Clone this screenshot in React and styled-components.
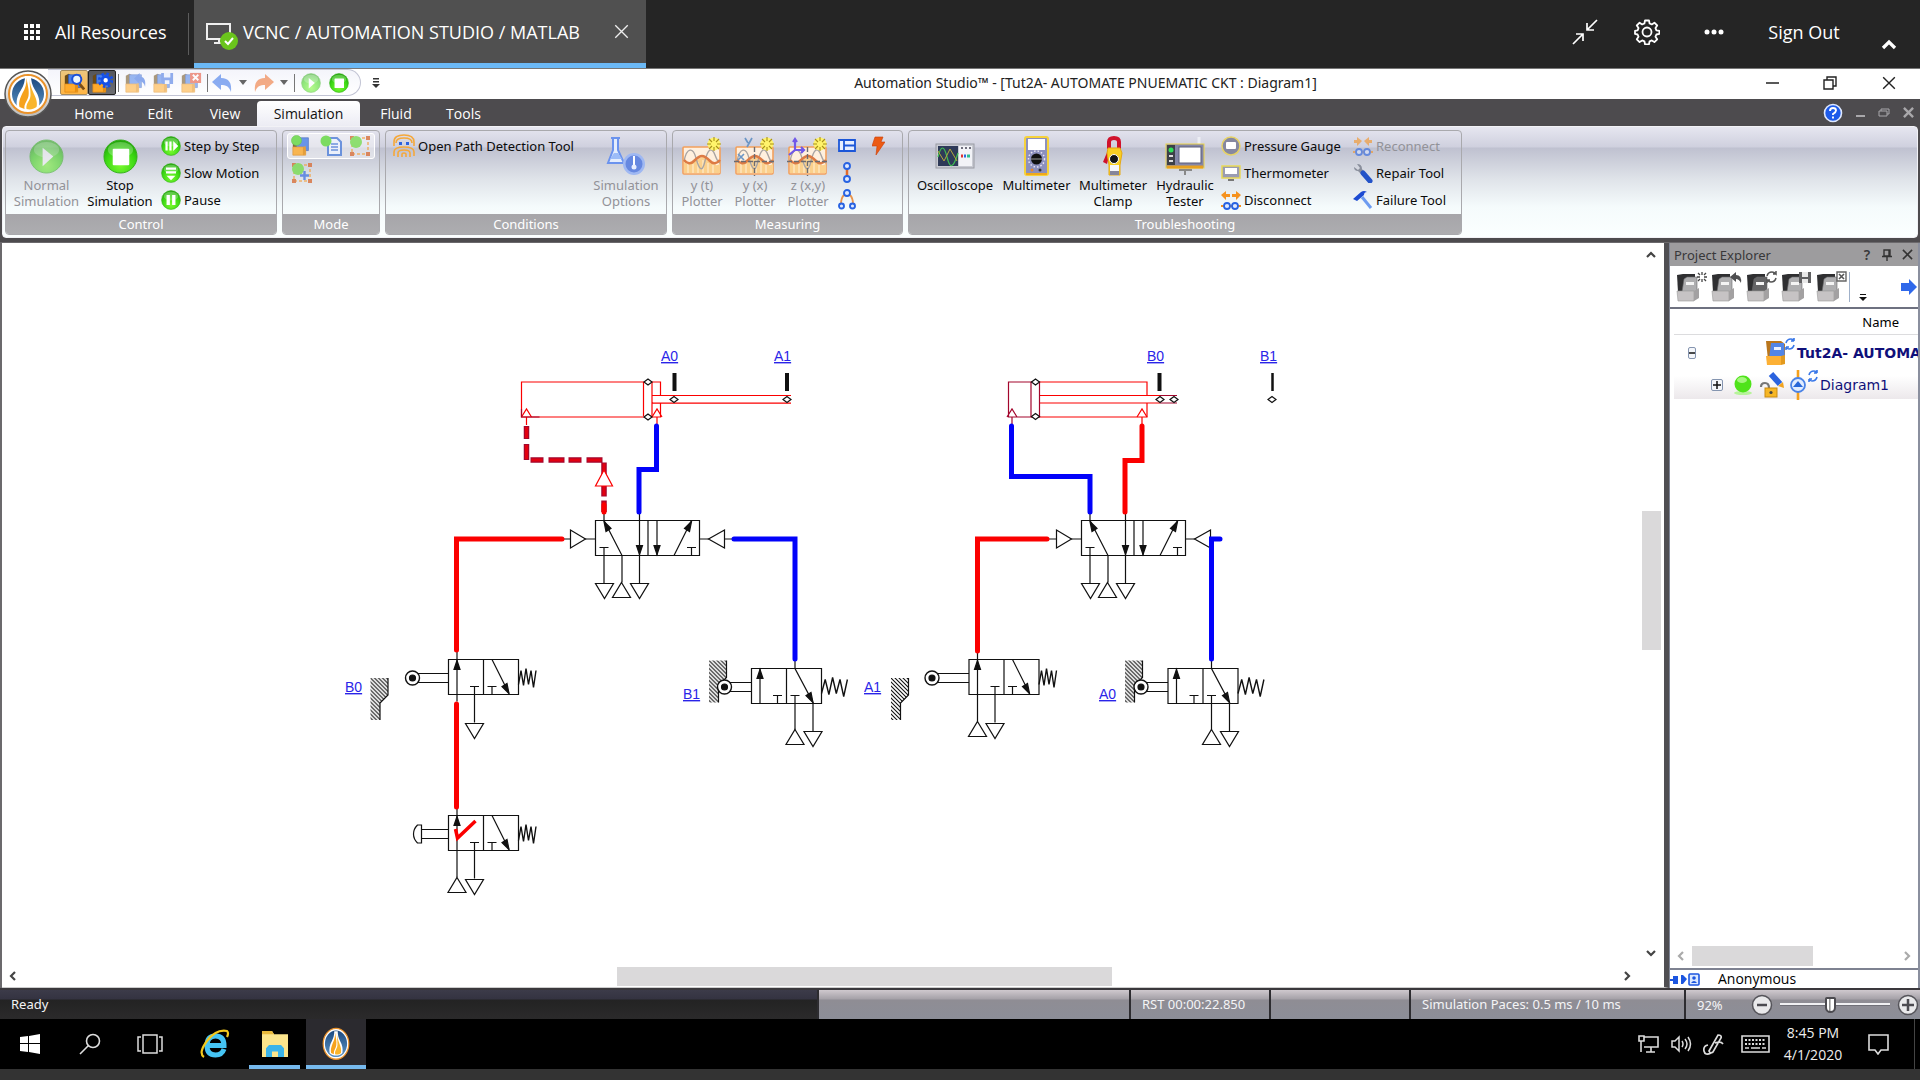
import React from 'react';
import styled, { createGlobalStyle } from 'styled-components';

const GlobalStyle = createGlobalStyle`
  * { box-sizing: border-box; }
  body { margin: 0; background: #333; font-family: 'Noto Sans', 'Open Sans', sans-serif; }
  button { font: inherit; color: inherit; background: none; border: 0; padding: 0; margin: 0; }
  ul { list-style: none; margin: 0; padding: 0; }
  svg { display: block; flex: none; }
`;

const Screen = styled.div`
  height: 100vh;
  display: flex;
  flex-direction: column;
  background: #333333;
  overflow: hidden;
`;

/* ---------- remote session bar ---------- */
const SessionBar = styled.header`
  display: flex;
  height: 69px;
  flex: none;
  background: #252525;
  border-bottom: 1px solid #777;
  color: #fff;
  font-family: 'Open Sans', 'Noto Sans', sans-serif;
  font-size: 18px;
`;
const ResourcesButton = styled.button`
  display: flex;
  align-items: center;
  gap: 14px;
  width: 188px;
  padding-left: 24px;
  padding-bottom: 4px;
  white-space: nowrap;
`;
const BarDivider = styled.div`
  width: 1px;
  height: 42px;
  margin: 13px 5px 0 0;
  background: #5c5c5c;
`;
const SessionTab = styled.div`
  display: flex;
  align-items: center;
  width: 452px;
  background: #505050;
  border-bottom: 5px solid #6bb9f6;
  padding: 0 17px 0 12px;
  white-space: nowrap;
`;
const TabName = styled.span`
  flex: 1;
  padding-left: 4px;
`;
const SessionActions = styled.div`
  display: flex;
  align-items: center;
  margin-left: auto;
  padding-bottom: 4px;
`;
const ActionButton = styled.button`
  display: flex;
  justify-content: center;
  align-items: center;
  width: ${(p) => p.$w || 62}px;
  height: 40px;
  padding-top: ${(p) => p.$drop || 0}px;
  white-space: nowrap;
`;

/* ---------- title bar ---------- */
const TitleBar = styled.div`
  display: flex;
  align-items: center;
  height: 30px;
  flex: none;
  position: relative;
  padding-bottom: 3px;
  background: #fff;
  color: #222;
  font-size: 14px;
`;
const AppButton = styled.button`
  position: absolute;
  left: 4px;
  top: 1px;
  z-index: 2;
`;
const QuickAccess = styled.div`
  display: flex;
  align-items: center;
  height: 27px;
  margin-left: 48px;
  padding-left: 12px;
  width: 313px;
  border: 1px solid #c2c4d4;
  border-left: 0;
  border-radius: 0 14px 14px 0;
  background: linear-gradient(#f4f5fb, #fff);
`;
const QuickButton = styled.button`
  display: flex;
  align-items: center;
  justify-content: center;
  width: ${(p) => p.$w || 28}px;
  height: 25px;
  opacity: ${(p) => (p.$dim ? 0.55 : 1)};
  ${(p) => p.$tone === 'gold' && 'background: linear-gradient(#ecc67e, #ffb545); border: 1px solid #a68c5e; border-radius: 2px;'}
  ${(p) => p.$tone === 'dark' && 'background: linear-gradient(#55565c, #6d6e72); border: 1px solid #222; border-radius: 2px;'}
`;
const QuickRule = styled.div`
  width: 1px;
  height: 18px;
  margin: 0 2px;
  background: #777;
`;
const WindowTitle = styled.h1`
  flex: 1;
  margin: 0;
  padding-left: 36px;
  text-align: center;
  font-size: 14px;
  font-weight: 400;
  white-space: nowrap;
`;
const WindowButton = styled.button`
  display: flex;
  justify-content: center;
  align-items: center;
  width: ${(p) => p.$w || 57}px;
  height: 26px;
`;

/* ---------- ribbon ---------- */
const TabStrip = styled.nav`
  display: flex;
  align-items: flex-end;
  height: 27px;
  flex: none;
  background: #4d4b4e;
  color: #fff;
  font-size: 14px;
  font-family: 'Open Sans', 'Noto Sans', sans-serif;
  padding-left: 61px;
`;
const RibbonTab = styled.button`
  height: 25px;
  width: ${(p) => p.$w}px;
  border-radius: 4px 4px 0 0;
  line-height: 20px;
  ${(p) => p.$active && 'background: linear-gradient(#fff, #ececf4); color: #111;'}
`;
const MdiControls = styled.div`
  display: flex;
  align-items: center;
  margin-left: auto;
  height: 27px;
`;
const Ribbon = styled.div`
  flex: none;
  padding: 0 2px 4px;
  background: #4d4b4e;
`;
const RibbonBody = styled.div`
  display: flex;
  gap: 5px;
  height: 112px;
  padding: 3px 2px 2px;
  border: 1px solid #f2f2f6;
  border-radius: 4px;
  background: linear-gradient(#e6e6f0 0, #cfd0de 20px, #bfc1d0 21px, #dfe3e9 52px, #f5fbfc 80px, #fbffff 100%);
`;
const Group = styled.section`
  display: flex;
  flex-direction: column;
  width: ${(p) => p.$w}px;
  border: 1px solid #a9a9ad;
  border-radius: 4px;
  overflow: hidden;
`;
const GroupBody = styled.div`
  display: flex;
  flex: 1;
  padding-top: 1px;
  padding-left: ${(p) => p.$left || 0}px;
`;
const GroupLabel = styled.h2`
  margin: 0;
  height: 20px;
  line-height: 20px;
  text-align: center;
  font-size: 13px;
  font-weight: 400;
  color: #fff;
  background: linear-gradient(#a6a5a9, #adadb0);
`;
const BigButton = styled.button`
  display: flex;
  flex-direction: column;
  align-items: center;
  width: ${(p) => p.$w}px;
  padding-top: 4px;
  font-size: 13px;
  line-height: 16px;
  color: ${(p) => (p.$off ? '#929298' : '#0b0b0b')};
`;
const BigIcon = styled.span`
  display: flex;
  align-items: center;
  justify-content: center;
  height: 40px;
  margin-bottom: 1px;
`;
const Stack = styled.div`
  display: flex;
  flex-direction: column;
  padding-left: ${(p) => p.$left || 0}px;
  width: ${(p) => p.$w || 'auto'};
`;
const SmallButton = styled.button`
  display: flex;
  align-items: center;
  gap: 3px;
  height: 27px;
  font-size: 13px;
  white-space: nowrap;
  color: ${(p) => (p.$off ? '#929298' : '#0b0b0b')};
`;
const ModeSet = styled.div`
  display: flex;
  width: 88px;
  height: 26px;
  margin: 1px 0 2px;
  border: 1px solid #fff;
  border-radius: 3px;
  background: rgba(255, 255, 255, 0.45);
`;
const ModeButton = styled.button`
  display: flex;
  align-items: center;
  justify-content: center;
  width: 29px;
  height: 24px;
  opacity: 0.8;
`;

/* ---------- workspace ---------- */
const Workspace = styled.main`
  display: grid;
  grid-template-columns: minmax(0, 1fr) 251px;
  flex: 1;
  min-height: 0;
  padding: 1px 0 0 2px;
  background: #6b696c;
`;
const CanvasPane = styled.section`
  display: grid;
  grid-template-columns: minmax(0, 1fr) 26px;
  grid-template-rows: minmax(0, 1fr) 22px;
  background: #fff;
  border-right: 5px solid #4f4e52;
  border-bottom: 1px solid #ccc;
`;
const Sheet = styled.div`
  overflow: hidden;
`;
const VScroll = styled.div`
  display: grid;
  grid-template-rows: 24px 244fr 138fr 291fr 24px;
  justify-items: center;
  align-items: center;
`;
const HScroll = styled.div`
  display: grid;
  grid-template-columns: 22px 593fr 495fr 504fr 22px;
  align-items: center;
  justify-items: center;
`;
const Thumb = styled.div`
  grid-area: ${(p) => p.$area};
  width: ${(p) => p.$w || '100%'};
  height: ${(p) => p.$h || '100%'};
  background: #dad9da;
`;
const ArrowButton = styled.button`
  grid-area: ${(p) => p.$area};
  display: flex;
  align-items: center;
  justify-content: center;
  width: 18px;
  height: 18px;
`;

/* ---------- project explorer ---------- */
const Explorer = styled.aside`
  display: flex;
  flex-direction: column;
  min-width: 0;
  background: #fff;
  border-left: 1px solid #7f8595;
  border-right: 2px solid #8a8f9e;
`;
const ExplorerHead = styled.div`
  display: flex;
  align-items: center;
  height: 23px;
  padding: 0 1px 0 4px;
  background: #9d9c9e;
  color: #38383a;
`;
const ExplorerTitle = styled.h2`
  flex: 1;
  margin: 0;
  font-size: 13px;
  font-weight: 400;
`;
const HeadButton = styled.button`
  display: flex;
  align-items: center;
  justify-content: center;
  width: 20px;
  height: 20px;
  font-size: 14px;
  font-weight: 600;
`;
const ExplorerTools = styled.div`
  display: flex;
  align-items: center;
  height: 43px;
  padding-left: 4px;
  border-bottom: 2px solid #6e7180;
`;
const ToolButton = styled.button`
  display: flex;
  align-items: center;
  justify-content: center;
  width: ${(p) => p.$w || 35}px;
  height: 36px;
`;
const ToolRule = styled.div`
  width: 1px;
  height: 30px;
  background: #9fb0c9;
`;
const TreeHeader = styled.div`
  height: 26px;
  margin-left: 4px;
  padding: 3px 19px 0 0;
  text-align: right;
  font-size: 13px;
  line-height: 20px;
  border-bottom: 1px solid #dcdcde;
`;
const Tree = styled.ul`
  flex: 1;
  overflow: hidden;
`;
const TreeRow = styled.li`
  display: flex;
  align-items: center;
  height: ${(p) => p.$h}px;
  margin-left: 4px;
  padding-left: ${(p) => p.$left}px;
  white-space: nowrap;
  color: #10107a;
  font: ${(p) => (p.$bold ? 'bold' : 'normal')} 14px 'DejaVu Sans', Verdana, sans-serif;
  background: ${(p) => (p.$hover ? 'linear-gradient(#fff 20%, #ece8eb)' : 'none')};
`;
const TreeLabel = styled.span`
  padding-left: 2px;
`;
const Toggle = styled.button`
  display: flex;
  width: 12px;
  height: 12px;
  margin-right: ${(p) => p.$gap}px;
  border: 1px solid #8595b0;
  border-radius: 2px;
  background: #f4f6fa;
  align-items: center;
  justify-content: center;
`;
const TreeScroll = styled.div`
  display: grid;
  grid-template-columns: 22px 120fr 82fr 22px;
  align-items: center;
  justify-items: center;
  height: 24px;
  padding-bottom: 2px;
  border-bottom: 2px solid #7e8291;
`;
const UserRow = styled.div`
  display: flex;
  align-items: center;
  gap: 18px;
  height: 18px;
  font-family: 'Open Sans', 'Noto Sans', sans-serif;
  font-size: 14px;
  line-height: 18px;
`;

/* ---------- status bar ---------- */
const StatusBar = styled.footer`
  display: flex;
  flex: none;
  height: 31px;
  border-top: 2px solid #3a383c;
  color: #f4f4f6;
  font-size: 13px;
  background: linear-gradient(#cfc9ce 0, #a5a1a8 9px, #8f8d94 10px, #8c8e98 100%);
`;
const StatusReady = styled.div`
  flex: 1;
  padding-left: 11px;
  line-height: 28px;
  background: linear-gradient(#3c3b49 0, #343341 9px, #232323 10px, #2b2a2b 100%);
`;
const StatusCell = styled.div`
  width: ${(p) => p.$w}px;
  padding-left: 11px;
  line-height: 28px;
  white-space: nowrap;
  border-left: 2px solid #2d2c30;
`;
const ZoomCell = styled.div`
  display: flex;
  align-items: center;
  width: 236px;
  padding: 0 1px 0 11px;
  border-left: 2px solid #2d2c30;
`;
const ZoomValue = styled.span`
  width: 54px;
`;
const ZoomSlider = styled.input`
  appearance: none;
  flex: 1;
  min-width: 0;
  height: 20px;
  margin: 0 7px;
  background: linear-gradient(transparent 8px, #f1f1f3 8px, #f1f1f3 10px, #707078 10px, #707078 11px, transparent 11px);
  &::-webkit-slider-thumb {
    appearance: none;
    width: 11px;
    height: 16px;
    background: linear-gradient(90deg, #fff 35%, #666 36%, #fff 60%);
    border: 2px solid #4c4b50;
    border-radius: 2px 2px 6px 6px;
  }
`;

/* ---------- task bar ---------- */
const TaskBar = styled.nav`
  display: flex;
  align-items: stretch;
  flex: none;
  height: 50px;
  margin-bottom: 11px;
  background: #000;
  color: #eee;
`;
const TaskButton = styled.button`
  display: flex;
  align-items: center;
  justify-content: center;
  width: ${(p) => p.$w || 60}px;
  margin-right: ${(p) => p.$after || 0}px;
  ${(p) => p.$open && 'border-bottom: 4px solid #76b9ed; padding-top: 4px;'}
  background: ${(p) => (p.$active ? '#2b2a2f' : 'none')};
`;
const Tray = styled.div`
  display: flex;
  align-items: center;
  margin-left: auto;
  padding-right: 5px;
`;
const TrayButton = styled.button`
  display: flex;
  justify-content: center;
  width: ${(p) => p.$w}px;
`;
const Clock = styled.button`
  width: 60px;
  text-align: center;
  white-space: nowrap;
  font-family: 'Open Sans', 'Noto Sans', sans-serif;
  font-size: 14px;
  line-height: 22px;
`;
const DesktopEdge = styled.div`
  width: 1px;
  align-self: stretch;
  background: #444;
`;

/* ---------- icon drawings ---------- */
function Logo({ size, rim }) {
  return (
    <svg width={size} height={size * (rim ? 1 : 1.2)} viewBox="0 0 48 48" preserveAspectRatio="none" aria-hidden="true">
      <defs>
        <linearGradient id="lg1" x1="0" y1="0" x2="0" y2="1">
          <stop offset="0" stopColor="#1c4a80" /><stop offset="1" stopColor="#5b93c4" />
        </linearGradient>
        <linearGradient id="lg2" x1="0" y1="0" x2="0" y2="1">
          <stop offset="0" stopColor="#fff" /><stop offset="1" stopColor="#bbb" />
        </linearGradient>
      </defs>
      {rim && <circle cx="24" cy="24" r="23" fill="url(#lg2)" stroke="#555" strokeWidth="1.5" />}
      <circle cx="24" cy="24" r={rim ? 19 : 22} fill="#fff" stroke="#e9922b" strokeWidth="2" />
      <circle cx="24" cy="24" r={rim ? 16 : 19} fill="url(#lg1)" />
      <path d="M21 6h6c0 5 1 9 4 14 4 6 5 11 4 17-6 5-16 5-22 0-1-6 0-11 4-17 3-5 4-9 4-14z" fill="#fff" />
      <path d="M22.500 8c0 6-1 10-4 15-3 6-4 10-3 14l5 2c-1-5 3-8 4-13 1-6-1-11-2-18z" fill="#f6a21c" />
      <path d="M25.500 8c0 6 2 10 4 15 3 6 4 10 3 14-3 2-6 3-10 2-1-6 4-8 4-14 0-5-1-10-1-17z" fill="#f9b52c" />
    </svg>
  );
}

function GreenOrb({ size, kind, dim }) {
  return (
    <svg width={size} height={size} viewBox="0 0 36 36" opacity={dim ? 0.55 : 1} aria-hidden="true">
      <defs>
        <radialGradient id="orb" cx="0.5" cy="0.75" r="0.75">
          <stop offset="0" stopColor="#7bfa30" /><stop offset="0.6" stopColor="#3bd813" /><stop offset="1" stopColor="#20a009" />
        </radialGradient>
      </defs>
      <circle cx="18" cy="18" r="17" fill="url(#orb)" stroke="#35b01c" />
      <ellipse cx="18" cy="11" rx="13" ry="8" fill="#fff" opacity="0.25" />
      {kind === 'play' && <path d="M14 9l11 9-11 10z" fill="#fff" />}
      {kind === 'stop' && <rect x="10" y="10" width="17" height="17" rx="1" fill="#fff" />}
      {kind === 'step' && <path d="M8 10h4v16H8zM15 10h4v16h-4zM22 9l9 9-9 9z" fill="#fff" />}
      {kind === 'slow' && <path d="M9 8h18v4H9zM9 15h18v4H9zM10 23h16l-8 8z" fill="#fff" />}
      {kind === 'pause' && <path d="M10 9h6v18h-6zM20 9h6v18h-6z" fill="#fff" />}
    </svg>
  );
}

function Binder({ size = 22, badge }) {
  return (
    <svg width={size} height={size} viewBox="0 0 24 24" aria-hidden="true">
      <path d="M2 4l4-2 4 2v9H2z" fill="#6a4a17" />
      <path d="M6 3h13v14H6z" fill="#4a80e8" stroke="#2b55b5" strokeWidth="0.7" />
      <path d="M2 13h11l3 2v7H2z" fill="#ffab2c" stroke="#d98413" strokeWidth="0.7" />
      <path d="M13 13l3-1v9l-3 1z" fill="#e58e12" />
      {badge === 'search' && <g><path d="M18 13l5 6" stroke="#7d4e12" strokeWidth="3" /><circle cx="15" cy="8" r="5" fill="#eaf5ff" stroke="#1c50d8" strokeWidth="2.2" /></g>}
      {badge === 'gear' && <g><circle cx="16" cy="9" r="7" fill="none" stroke="#1550e8" strokeWidth="3" strokeDasharray="2.7 2.8" /><circle cx="16" cy="9" r="4" fill="#fff" stroke="#1550e8" strokeWidth="3.2" /></g>}
      {badge === 'back' && <path d="M11 7l6-6v4c5 0 7 4 6 11-1-4-3-6-6-6v3z" fill="#3369e0" />}
      {badge === 'save' && <g><path d="M10 1h13v12H12l-2-2z" fill="#3c6fe0" /><path d="M13 1h7v5h-7zM14 9h5v4h-5z" fill="#e9f0ff" /></g>}
      {badge === 'close' && <g><rect x="11" y="1" width="12" height="11" fill="#e6482c" /><path d="M14 3l6 6M20 3l-6 6" stroke="#fff" strokeWidth="2" /></g>}
      {badge === 'ball' && <circle cx="6" cy="6" r="5.5" fill="#62d93e" stroke="#46b929" strokeWidth="0.6" />}
    </svg>
  );
}

function Arrow({ flip }) {
  return (
    <svg width="20" height="20" viewBox="0 0 20 20" aria-hidden="true">
      <path transform={flip ? 'translate(20 0) scale(-1 1)' : undefined} d="M0 9l9-8v4c8 0 11 5 10 14-2-6-5-7-10-7v5z" fill={flip ? '#ee6a24' : '#2f6ce8'} />
    </svg>
  );
}

const Caret = () => (
  <svg width="8" height="5" viewBox="0 0 8 5" aria-hidden="true"><path d="M0 0h8L4 5z" fill="#666" /></svg>
);
const Overflow = () => (
  <svg width="8" height="10" viewBox="0 0 8 10" aria-hidden="true"><path d="M1 0h6v1.500H1zM1 3h6v1.500H1zM0 6h8L4 10z" fill="#333" /></svg>
);

function Selection({ plus }) {
  return (
    <svg width="22" height="22" viewBox="0 0 22 22" aria-hidden="true">
      <path d="M3 3h16v16H3z" fill="none" stroke="#f2a548" strokeWidth="1.5" strokeDasharray="3 2" />
      {[[3, 3], [19, 3], [3, 19], [19, 19]].map(([x, y]) => <rect key={`${x}-${y}`} x={x - 2} y={y - 2} width="4" height="4" fill="#d8703c" />)}
      <circle cx="7" cy="7" r="6" fill="#79dc52" />
      {plus && <path d="M13.500 9v9M9 13.500h9" stroke="#4a78e0" strokeWidth="2.4" />}
    </svg>
  );
}
const PageMode = () => (
  <svg width="22" height="22" viewBox="0 0 22 22" aria-hidden="true">
    <path d="M8 3h9l4 4v13H8z" fill="#eef4ff" stroke="#4f7fd9" strokeWidth="2" />
    <path d="M11 9h7M11 12h7M11 15h7" stroke="#4f7fd9" strokeWidth="1.4" />
    <circle cx="6" cy="6" r="5.500" fill="#62d93e" />
  </svg>
);
const PathIcon = () => (
  <svg width="22" height="24" viewBox="0 0 22 24" fill="none" aria-hidden="true">
    <path d="M1 12V8q0-7 10-7t10 7v4M3 9q0-5 8-5t8 5" stroke="#f5a83a" strokeWidth="1.600" />
    <path d="M1 22v-4q0-5 10-5t10 5v4M5 23v-4q0-3 6-3t6 3v4M9 23v-3q0-1 2-1t2 1v3" stroke="#f5a83a" strokeWidth="1.600" />
    <path d="M6 8h3v3H6zM13 8h3v3h-3z" fill="#2b62e0" />
  </svg>
);
const FlaskIcon = () => (
  <svg width="42" height="40" viewBox="0 0 42 40" fill="none" aria-hidden="true">
    <path d="M6 2h9M8 3v11L3 27h16l-6-13V3" stroke="#6b93ee" strokeWidth="2" fill="#e4edfd" />
    <path d="M5 23l4-6h4l4 6z" fill="#9cbcf8" />
    <circle cx="29" cy="28" r="11" fill="#9fb8f2" />
    <circle cx="29" cy="28" r="8.500" fill="#6688e0" />
    <path d="M29 20v9" stroke="#fff" strokeWidth="2" /><circle cx="29" cy="31" r="2.500" fill="#e8eeff" />
  </svg>
);
const Spark = () => (
  <g><circle cx="33" cy="8" r="6.500" fill="#fff36b" />
    <path d="M33 1v4M33 11v4M26 8h4M36 8h4M28 3l3 3M38 3l-3 3M28 13l3-3M38 13l-3-3" stroke="#a8901a" strokeWidth="1.1" /></g>
);
function PlotterIcon({ kind }) {
  return (
    <svg width="42" height="40" viewBox="0 0 42 40" fill="none" aria-hidden="true">
      <rect x="2" y="11" width="37" height="27" rx="1" fill="#fff0de" stroke="#f3a05c" strokeWidth="1.6" />
      <path d="M3 26q5 4 10 0t8-5 9 5 9 1v10H3z" fill="#fbd08c" />
      <path d="M7 28v9M12 28v9M17 26v11M22 24v13M27 27v10M32 29v8" stroke="#fff0d6" />
      <path d="M3 25c3-14 9-14 12-3s6 16 9 3 7-14 10-6 3 6 5 8" stroke="#a9a4a2" strokeWidth="1.4" />
      <path d="M3 24q5 6 10 1t8-5 8 5 10-1" stroke="#dd7b45" strokeWidth="2.600" />
      {kind !== 't' && <path d="M20.500 11v29M0 25.500h42" stroke="#6c6b70" strokeWidth="1.400" strokeDasharray="5 2" />}
      {kind === 'x' && <g stroke="#6c96c6" strokeWidth="1.700"><path d="M11 2l3 5M18 2l-5 9M4 18l6 6M10 18l-6 6" /></g>}
      {kind === 'z' && <path d="M8 3v11h9M8 14l-6 5M6 6l2-3 2 3M14 11l3 3-3 3" stroke="#7058e8" strokeWidth="2.200" />}
      <Spark />
    </svg>
  );
}
const TableIcon = () => (
  <svg width="18" height="13" viewBox="0 0 18 13" fill="#e6eeff" stroke="#1b56d8" strokeWidth="1.800" aria-hidden="true"><path d="M1 1h16v11H1zM6 1v11M6 6.500h11" /></svg>
);
const LinkIcon = () => (
  <svg width="18" height="22" viewBox="0 0 18 22" fill="#dfe9ff" stroke="#2863e2" strokeWidth="1.900" aria-hidden="true"><path d="M9 7v8" stroke="#e2692a" strokeWidth="2.500" /><circle cx="9" cy="4" r="3" /><circle cx="9" cy="17" r="3" /></svg>
);
const BranchIcon = () => (
  <svg width="18" height="22" viewBox="0 0 18 22" fill="#dfe9ff" stroke="#2863e2" strokeWidth="1.900" aria-hidden="true"><path d="M6 6Q3 9 3 15M12 6q3 3 3 9" stroke="#e8934a" strokeWidth="1.800" fill="none" /><circle cx="9" cy="4" r="3" /><circle cx="3.500" cy="17" r="2.500" /><circle cx="14.500" cy="17" r="2.500" /></svg>
);
const BoltIcon = () => (
  <svg width="13" height="20" viewBox="0 0 13 20" aria-hidden="true"><path d="M3 1h8L9 6h4L4 19l1-9H0z" fill="#ec5a14" stroke="#c93d05" strokeWidth="0.600" /></svg>
);
const ScopeIcon = () => (
  <svg width="40" height="26" viewBox="0 0 40 26" fill="none" aria-hidden="true">
    <rect x="1" y="1" width="38" height="24" fill="#c9cbd3" stroke="#9a9ca4" />
    <rect x="3" y="3" width="20" height="20" fill="#2e3a58" />
    <path d="M3 14c3-12 6-12 9 0s6 12 11-4" stroke="#3fbf52" strokeWidth="1.200" /><path d="M3 8l6 10 6-12 7 12" stroke="#b4a73c" />
    <path d="M24 3h13v20H24z" fill="#f2f3f7" /><path d="M26 5h2M30 5h2M34 5h2" stroke="#445" strokeWidth="1.500" />
    <path d="M26 13h2" stroke="#d33" strokeWidth="3" /><path d="M29 13h2" stroke="#2a6be0" strokeWidth="3" /><path d="M32 13h3" stroke="#2abf90" strokeWidth="3" />
  </svg>
);
const MeterIcon = () => (
  <svg width="25" height="40" viewBox="0 0 25 40" aria-hidden="true">
    <rect x="1" y="1" width="23" height="38" rx="2" fill="#8d90bd" stroke="#f6d23c" strokeWidth="2" />
    <rect x="4" y="3" width="17" height="11" fill="#fff" />
    <circle cx="12.500" cy="23" r="8" fill="none" stroke="#e8e4f3" strokeWidth="1.500" strokeDasharray="1.500 2" />
    <circle cx="12.500" cy="23" r="5.500" fill="#111" /><path d="M7 23h11" stroke="#999" strokeWidth="1.200" />
    <circle cx="8" cy="34" r="1.500" fill="#e38830" /><circle cx="16" cy="34" r="1.500" fill="#333" /><path d="M2 38h21" stroke="#f0a91c" strokeWidth="2" />
  </svg>
);
const ClampIcon = () => (
  <svg width="20" height="40" viewBox="0 0 20 40" aria-hidden="true">
    <path d="M6 13V6q0-4 5-4t5 4v7" fill="none" stroke="#d0122c" strokeWidth="4" /><path d="M0 26l5-12 2 3-3 11z" fill="#d0122c" />
    <path d="M5 12h12l2 5-2 12v10H6V29L4 17z" fill="#f9cf22" stroke="#e5a812" />
    <circle cx="11" cy="23" r="4.500" fill="#151515" stroke="#fff" /><path d="M7 29h9v6H7z" fill="#f5f6fb" /><path d="M7 35h9v4H7z" fill="#85859a" />
  </svg>
);
const TesterIcon = () => (
  <svg width="40" height="40" viewBox="0 0 40 40" aria-hidden="true">
    <path d="M34 1v8" stroke="#eceef4" strokeWidth="3" /><rect x="1" y="8" width="38" height="24" fill="#8587a8" stroke="#ecd44a" />
    <rect x="2" y="9" width="8" height="20" fill="#3d4048" /><circle cx="6" cy="14" r="2.500" fill="#2ee05a" /><path d="M4 20h4M4 25h4" stroke="#ddd" strokeWidth="2" />
    <rect x="14" y="11" width="22" height="16" fill="#fff" stroke="#5c5f78" /><path d="M2 31h36" stroke="#e8a120" strokeWidth="3" />
    <path d="M14 34h13M20 33v6" stroke="#888" strokeWidth="2" />
  </svg>
);
const GaugeIcon = () => (
  <svg width="20" height="20" viewBox="0 0 20 20" aria-hidden="true"><circle cx="10" cy="10" r="9" fill="#8688a0" stroke="#e6d266" strokeWidth="1.500" /><rect x="5" y="6" width="10" height="7" rx="1" fill="#fff" /></svg>
);
const ThermoIcon = () => (
  <svg width="20" height="18" viewBox="0 0 20 18" aria-hidden="true"><rect x="1" y="2" width="18" height="12" fill="#9a9cb2" stroke="#e9d957" strokeWidth="1.500" /><path d="M4 4h12v6H4z" fill="#fff" /><path d="M7 15h6v2H7z" fill="#777" /></svg>
);
const ConnectIcon = ({ dim }) => (
  <svg width="20" height="20" viewBox="0 0 20 20" opacity={dim ? 0.6 : 1} aria-hidden="true">
    {dim
      ? <path d="M9 5L4 1v3H1v3h3v3zM11 5l5-4v3h3v3h-3v3z" transform="translate(20 0) scale(-1 1)" fill="#f59220" />
      : <path d="M0 5l5-4v3h4v3H5v3zM20 5l-5-4v3h-4v3h4v3z" fill="#f59220" />}
    <path d="M0 16h20" stroke="#f59220" strokeWidth="2" />
    <circle cx="6" cy="16" r="3" fill="#dfe9ff" stroke="#2863e2" strokeWidth="1.800" /><circle cx="14" cy="16" r="3" fill="#dfe9ff" stroke="#2863e2" strokeWidth="1.800" />
  </svg>
);
const WrenchIcon = () => (
  <svg width="20" height="20" viewBox="0 0 20 20" fill="none" aria-hidden="true"><path d="M1 4l4 3 2-2-3-4q5 0 5 5l3 4-3 2-4-4Q1 8 1 4z" fill="#8a8f9c" /><path d="M10 10l7 8" stroke="#2353c8" strokeWidth="5" strokeLinecap="round" /></svg>
);
const HammerIcon = () => (
  <svg width="20" height="20" viewBox="0 0 20 20" fill="none" aria-hidden="true"><path d="M0 9l8-7q3-2 6 0-3 0-3 3l-7 6z" fill="#1d4bd2" /><path d="M9 7l9 11" stroke="#6d9bf0" strokeWidth="3" /></svg>
);

function GreyBinder({ badge, dark }) {
  return (
    <svg width="31" height="32" viewBox="0 0 31 32" fill="none" aria-hidden="true">
      <path d="M1 4l6-1h12v18H2z" fill="#2f2f31" />
      <path d="M8 8l3-2h10v15H6z" fill={dark ? '#646466' : '#aeaeb0'} stroke="#6a6a6c" strokeWidth="0.600" />
      <path d="M10 11h8v3h-8z" fill="#f4f4f4" />
      <path d="M1 20h17v10H2z" fill="#c6c3c4" stroke="#999" strokeWidth="0.600" /><path d="M18 20l5-3v10l-5 3z" fill="#a3a1a2" />
      {badge === 'new' && <path d="M26 1v3M26 8v3M21 6h3M28 6h3M22 2l2 2M30 2l-2 2M22 10l2-2M30 10l-2-2" stroke="#444" strokeWidth="1.300" />}
      {badge === 'back' && <path d="M19 6l6-5v3q6 0 5 8-2-4-5-4v3z" fill="#4e4e50" />}
      {badge === 'sync' && <path d="M21 5q1-4 5-4 2 0 4 2V0M30 3h-3M30 7q-1 4-5 4-2 0-4-2v3M21 9h3" stroke="#555" strokeWidth="1.500" />}
      {badge === 'save' && <g><path d="M18 1h12v11H18z" fill="#606062" /><path d="M21 1h6v5h-6zM21 8h6v4h-6z" fill="#e8e8e8" /></g>}
      {badge === 'close' && <g><path d="M21 1h9v9h-9z" fill="#fff" stroke="#666" strokeWidth="1.400" /><path d="M23 3l5 5M28 3l-5 5" stroke="#555" strokeWidth="1.600" /></g>}
    </svg>
  );
}
const ProjectIcon = () => (
  <svg width="30" height="30" viewBox="0 0 30 30" fill="none" aria-hidden="true">
    <path d="M1 3h15l4 3v16H3z" fill="#b9761c" /><path d="M6 5h13l1 16H4z" fill="#5185e6" /><path d="M9 9h7v3H9z" fill="#e9f1ff" />
    <path d="M1 18h15v9H2z" fill="#fcb035" /><path d="M16 18l4-1v9l-4 1z" fill="#e39a1e" />
    <path d="M21 5q1-4 5-4 2 0 3 2V0M29 3h-3M29 7q-1 4-5 4-2 0-3-2v3M21 9h3" stroke="#3a78e8" strokeWidth="1.600" />
  </svg>
);
const OrbIcon = () => (
  <svg width="20" height="22" viewBox="0 0 20 22" aria-hidden="true"><ellipse cx="10" cy="19" rx="9" ry="2" fill="#b7f39a" /><circle cx="10" cy="10" r="8.500" fill="#4fe31a" /><ellipse cx="9" cy="6" rx="5" ry="3" fill="#a4f67e" /></svg>
);
const LockIcon = () => (
  <svg width="26" height="28" viewBox="0 0 26 28" fill="none" aria-hidden="true">
    <path d="M2 16q0-4 4-4t4 5" stroke="#777" strokeWidth="2.200" /><rect x="6" y="17" width="12" height="9" fill="#f6b625" stroke="#c98a10" /><circle cx="12" cy="21.500" r="1.600" fill="#444" />
    <path d="M12 3l9 10" stroke="#2b63de" strokeWidth="6" /><path d="M19 15l5-4 1 6z" fill="#f1a31f" />
  </svg>
);
const DiagramIcon = () => (
  <svg width="28" height="30" viewBox="0 0 28 30" fill="none" aria-hidden="true">
    <path d="M8 0v30" stroke="#f5a01c" strokeWidth="2.600" /><circle cx="8" cy="15" r="7" fill="#e2edff" stroke="#4b83e6" strokeWidth="1.800" /><path d="M3 17l5-6 5 6z" fill="#2867d8" />
    <path d="M19 5q1-4 5-4 2 0 3 2V0M27 3h-3M27 7q-1 4-5 4-2 0-3-2v3M19 9h3" stroke="#3a78e8" strokeWidth="1.600" />
  </svg>
);
const UserIcon = () => (
  <svg width="30" height="13" viewBox="0 0 30 13" aria-hidden="true"><path d="M0 6h3V3h5v8H3V8H0zM11 2h2l4 4-4 5h-2z" fill="#1c56e0" /><rect x="19" y="1" width="10" height="11" rx="1" fill="#dce8ff" stroke="#1c56e0" strokeWidth="1.600" /><circle cx="24" cy="5" r="1.800" fill="#1c56e0" /><path d="M21 10q3-4 6 0z" fill="#1c56e0" /></svg>
);

function Chevron({ dir, color = '#444', size = 12 }) {
  const turn = { up: 0, right: 90, down: 180, left: 270 }[dir];
  return (
    <svg width={size} height={size} viewBox="0 0 12 12" fill="none" aria-hidden="true">
      <path d="M2 8l4-4 4 4" transform={`rotate(${turn} 6 6)`} stroke={color} strokeWidth="2.200" />
    </svg>
  );
}
function Cross({ size = 13, color = '#222', weight = 1.2 }) {
  return (
    <svg width={size} height={size} viewBox="0 0 12 12" aria-hidden="true"><path d="M1 1l10 10M11 1L1 11" stroke={color} strokeWidth={weight} /></svg>
  );
}

/* ---------- pneumatic circuit ---------- */
const Drawing = styled.svg`
  font: 14px 'Liberation Sans', Arial, sans-serif;
  a { fill: #2a24e8; stroke: none; text-decoration: underline; }
`;
const RED = '#fb0000';
const BLUE = '#0202fa';
const WINE = '#a3062c';

const Tri = ({ x, y, up }) => <path d={up ? `M${x} ${y}l9 15h-18z` : `M${x - 9} ${y}h18l-9 15z`} fill="#fff" />;
const Pipe = ({ d, color }) => <path d={d} stroke={color} strokeWidth="5" strokeLinecap="round" />;
const Diamond = ({ x, y }) => <path d={`M${x - 4} ${y}l4-3 4 3-4 3z`} fill="#fff" />;

function FiveWay({ x }) {
  return (
    <g transform={`translate(${x} 520.500)`}>
      <path d="M0 0h104v35H0zM52.500 0v35M8.500-7v7M44-7v70M8.500 27v36M4 27h9M26.500 35v27M26.500 35L8.500 0M61.500 0v35M78.500 35L96 0M96 27v8M91.500 27h9M0 18.500h-33M104 18.500h34" fill="none" />
      <path d="M8.500 1l7 7-5 3zM96 1l-7 7 5 3zM44 34l-3-9h6zM61.500 34l-3-9h6z" fill="#111" />
      <Tri x={9} y={63} /><Tri x={26} y={62} up /><Tri x={44} y={63} />
      <path d="M-25 9.500v18l15-9zM129 9.500v18l-16-9z" fill="#fff" />
    </g>
  );
}
const Spring = ({ w }) => <path d={`M70 25l${w} -14 ${w} 15 ${w} -17 ${w} 16 ${w} -14 ${w} 17 ${w} -17`} fill="none" strokeWidth="1.400" />;

function ThreeWay({ x, y, pressed, supply = true, actuator = 'roller', gap = 32 }) {
  return (
    <g transform={`translate(${x} ${y})`}>
      <path d="M0 0h70v35H0zM35 0v35" fill="none" />
      <Spring w={pressed ? 2.5 : 3.7} />
      {pressed ? (
        <g>
          <path d={`M8.500-9v${supply ? 71 : 51}M26 27v36M21.500 27h9M43.500 27v8M39 27h9M43.500 0l17 34`} fill="none" />
          <path d="M8.500 1l3 9h-6zM60.500 34l-7-7 5-3z" fill="#111" />
          {supply && <Tri x={8.5} y={62} up />}
          <Tri x={26} y={64} />
        </g>
      ) : (
        <g>
          <path d="M8.500 0v35M26 27v8M21.500 27h9M43.500-8v8l18 34v29M43.500 27v35M39 27h9" fill="none" />
          <path d="M8.500 1l3 9h-6zM61.500 34l-7-7 5-3z" fill="#111" />
          <Tri x={43.5} y={61} up /><Tri x={61.5} y={63} />
        </g>
      )}
      <path d={`M0 14h${-gap}M0 23h${-gap}`} />
      {actuator === 'roller' ? (
        <g>
          <circle cx={-gap - 4} cy="18.500" r="7" fill="#fff" strokeWidth="1.400" />
          <circle cx={-gap - 4} cy="18.500" r="3" fill="#111" />
        </g>
      ) : (
        <path d="M-27 9.500v18h-4q-4-4-4-9t4-9z" fill="#fff" />
      )}
    </g>
  );
}
function Cam({ x, y }) {
  return (
    <g transform={`translate(${x} ${y})`}>
      <path d="M0 0h17.500v17l-8 8v17H0z" fill="url(#hatch)" stroke="none" />
      <path d="M17.500 0v17l-8 8v17" fill="none" />
    </g>
  );
}
const Tag = ({ x, y, children }) => <a href="#sensor"><text x={x} y={y}>{children}</text></a>;

function Circuit() {
  return (
    <Drawing width="1400" height="720" viewBox="2 243 1400 720" stroke="#111" strokeWidth="1.200" fill="none" role="img" aria-label="Pneumatic circuit">
      <defs>
        <pattern id="hatch" width="4" height="4" patternUnits="userSpaceOnUse">
          <path d="M-1-1l6 6M-1 3l2 2M3-1l2 2" stroke="#111" strokeWidth="1.100" />
        </pattern>
      </defs>

      <g stroke={RED}>
        <path d="M521.500 382h139v35h-139zM643.500 382v34M652 382v34" />
        <path d="M652 395.500h139M791 403h-139" /><path d="M653 396h138v7h-138z" fill="#fff" stroke="none" /><path d="M652 395.500h139M652 403h139" />
        <path d="M521.500 417l5-8 5 8M526.500 417v8M652 417l5-8 5 8M657 417v8" />
      </g>
      <path d="M521.500 409v8h18" stroke={WINE} />
      <Diamond x={648} y={382} /><Diamond x={648} y={417} /><Diamond x={674} y={399.5} /><Diamond x={787} y={399.5} />
      <path d="M674.500 373v18M787 373v18" strokeWidth="4" />

      <g stroke={RED}>
        <path d="M1031 382h116v35h-116" />
        <path d="M1040 396h119v7h-119z" fill="#fff" stroke="none" /><path d="M1039 395.500h121M1039 403h121" />
        <path d="M1137 417l5-8 5 8M1142 417v8" />
      </g>
      <path d="M1008.500 382h31v35h-31zM1031 382v35M1160 395.500h17M1160 403h17M1007 417l5-8 5 8M1012 417v8" stroke={WINE} />
      <Diamond x={1035.5} y={382} /><Diamond x={1035.5} y={416.5} /><Diamond x={1160} y={399.5} /><Diamond x={1174} y={399.5} /><Diamond x={1272} y={399.5} />
      <path d="M1159.500 373v18" strokeWidth="4" /><path d="M1272.500 373v18" strokeWidth="2.500" />

      <FiveWay x={595.5} /><FiveWay x={1081.5} />
      <ThreeWay x={448.5} y={659.5} pressed supply={false} />
      <ThreeWay x={448.5} y={815.5} pressed actuator="button" gap={27} />
      <Cam x={709} y={660.5} />
      <ThreeWay x={751.5} y={668.5} gap={23} />
      <ThreeWay x={969} y={659.5} pressed gap={33} />
      <Cam x={1125} y={660.5} />
      <ThreeWay x={1168} y={668.5} gap={23} />
      <Cam x={370.5} y={678} /><Cam x={891} y={678} />

      <path d="M526.500 426v34h77.500v52" stroke={WINE} strokeWidth="5.500" strokeDasharray="13 5 16 4" />
      <path d="M526.500 427v33h77.500v51" stroke="#e30010" strokeWidth="3" strokeDasharray="11 7 14 6" />
      <path d="M604 505v7" stroke={RED} strokeWidth="5" strokeLinecap="round" />
      <path d="M604 470l8.500 16h-17z" fill="#fff" stroke={RED} />
      <Pipe d="M656.500 426v43.500h-17.500V512" color={BLUE} />
      <Pipe d="M1011.500 426v50.500h78.500V512" color={BLUE} />
      <Pipe d="M1142 426v34.500h-17V512" color={RED} />
      <Pipe d="M562 539H456.500V650" color={RED} />
      <Pipe d="M456.500 704v103" color={RED} />
      <Pipe d="M734 539h61v120" color={BLUE} />
      <Pipe d="M1047 539h-69.500v112" color={RED} />
      <Pipe d="M1220 539h-8.500v120" color={BLUE} />
      <path d="M455.500 829l2 9 18-17" stroke={RED} strokeWidth="3.500" />

      <Tag x={661} y={361}>A0</Tag><Tag x={774} y={361}>A1</Tag>
      <Tag x={1147} y={361}>B0</Tag><Tag x={1260} y={361}>B1</Tag>
      <Tag x={345} y={692}>B0</Tag><Tag x={683} y={699}>B1</Tag>
      <Tag x={864} y={692}>A1</Tag><Tag x={1099} y={699}>A0</Tag>
    </Drawing>
  );
}

/* ---------- sections ---------- */
function TopBar() {
  return (
    <SessionBar>
      <ResourcesButton>
        <svg width="17" height="17" viewBox="0 0 17 17" fill="#fff" aria-hidden="true">
          {[0, 6, 12].map((x) => [0, 6, 12].map((y) => <rect key={`${x}${y}`} x={x} y={y} width="4" height="4" />))}
        </svg>
        All Resources
      </ResourcesButton>
      <BarDivider />
      <SessionTab>
        <svg width="33" height="38" viewBox="0 -8 33 38" fill="none" aria-hidden="true">
          <rect x="1" y="3" width="23" height="15" stroke="#eee" strokeWidth="2" /><path d="M13 18v4M8 22h9" stroke="#eee" strokeWidth="2" />
          <circle cx="23" cy="20" r="9" fill="#6ac41c" /><path d="M19 20l3 3 5-6" stroke="#fff" strokeWidth="2" />
        </svg>
        <TabName>VCNC / AUTOMATION STUDIO / MATLAB</TabName>
        <button aria-label="Close session"><Cross size={15} color="#eee" weight={1.1} /></button>
      </SessionTab>
      <SessionActions>
        <ActionButton aria-label="Exit full screen">
          <svg width="26" height="26" viewBox="0 0 26 26" fill="none" stroke="#fff" strokeWidth="1.700" aria-hidden="true"><path d="M25 1L15 11M15 4v7h7M1 25l10-10M4 15h7v7" /></svg>
        </ActionButton>
        <ActionButton aria-label="Settings">
          <svg width="26" height="26" viewBox="0 0 26 26" fill="none" stroke="#fff" strokeWidth="1.800" aria-hidden="true">
            <circle cx="13" cy="13" r="4.500" />
            <path strokeLinejoin="round" d="M11 1.500h4l.6 3 2.200.9 2.600-1.700 2.800 2.800-1.700 2.600.9 2.200 3 .6v3l-3 .6-.9 2.200 1.700 2.600-2.800 2.800-2.600-1.700-2.200.9-.6 3h-4l-.6-3-2.200-.9-2.600 1.700-2.800-2.800 1.700-2.600-.9-2.200-2.600-.6v-3l2.600-.6.9-2.200L2.800 6.500l2.800-2.800 2.600 1.700 2.200-.9z" />
          </svg>
        </ActionButton>
        <ActionButton $w={72} aria-label="More">
          <svg width="20" height="6" viewBox="0 0 20 6" fill="#fff" aria-hidden="true"><circle cx="3" cy="3" r="2.500" /><circle cx="10" cy="3" r="2.500" /><circle cx="17" cy="3" r="2.500" /></svg>
        </ActionButton>
        <ActionButton $w={108}>Sign Out</ActionButton>
        <ActionButton $w={62} $drop={26} aria-label="Collapse"><Chevron dir="up" color="#fff" size={18} /></ActionButton>
      </SessionActions>
    </SessionBar>
  );
}

function Title() {
  return (
    <TitleBar>
      <AppButton aria-label="Application menu"><Logo size={48} rim /></AppButton>
      <QuickAccess>
        <QuickButton $tone="gold" aria-label="Find"><Binder badge="search" /></QuickButton>
        <QuickButton $tone="dark" aria-label="Configure"><Binder badge="gear" /></QuickButton>
        <QuickRule />
        <QuickButton $dim aria-label="Reopen"><Binder badge="back" /></QuickButton>
        <QuickButton $dim aria-label="Save"><Binder badge="save" /></QuickButton>
        <QuickButton $dim aria-label="Close"><Binder badge="close" /></QuickButton>
        <QuickRule />
        <QuickButton $w={24} $dim aria-label="Undo"><Arrow /></QuickButton>
        <QuickButton $w={18} aria-label="Undo list"><Caret /></QuickButton>
        <QuickButton $w={24} $dim aria-label="Redo"><Arrow flip /></QuickButton>
        <QuickButton $w={16} aria-label="Redo list"><Caret /></QuickButton>
        <QuickRule />
        <QuickButton aria-label="Run"><GreenOrb size={20} kind="play" dim /></QuickButton>
        <QuickButton aria-label="Stop"><GreenOrb size={20} kind="stop" /></QuickButton>
      </QuickAccess>
      <QuickButton $w={30} aria-label="Customize"><Overflow /></QuickButton>
      <WindowTitle>Automation Studio™ - [Tut2A- AUTOMATE PNUEMATIC CKT : Diagram1]</WindowTitle>
      <WindowButton aria-label="Minimize"><svg width="13" height="2" aria-hidden="true"><path d="M0 1h13" stroke="#222" strokeWidth="1.500" /></svg></WindowButton>
      <WindowButton aria-label="Restore"><svg width="14" height="14" viewBox="0 0 14 14" fill="none" stroke="#222" strokeWidth="1.400" aria-hidden="true"><path d="M1 4h9v9H1zM4 4V1h9v9h-3" /></svg></WindowButton>
      <WindowButton $w={62} aria-label="Close window"><Cross size={14} /></WindowButton>
    </TitleBar>
  );
}

const TABS = [['Home', 66], ['Edit', 66], ['View', 64], ['Simulation', 103], ['Fluid', 72], ['Tools', 63]];

function Tabs() {
  return (
    <TabStrip>
      {TABS.map(([name, w]) => <RibbonTab key={name} $w={w} $active={name === 'Simulation'}>{name}</RibbonTab>)}
      <MdiControls>
        <WindowButton $w={30} aria-label="Help">
          <svg width="20" height="20" viewBox="0 0 20 20" aria-hidden="true"><circle cx="10" cy="10" r="8.500" fill="#1d5bea" stroke="#dfe9ff" strokeWidth="1.600" /><path d="M7 8q0-3 3-3t3 2.500q0 1.500-3 3.500v1M10 13.500v2" stroke="#fff" strokeWidth="1.900" fill="none" /></svg>
        </WindowButton>
        <WindowButton $w={24} aria-label="Minimize document"><svg width="9" height="9" aria-hidden="true"><path d="M0 8h9" stroke="#a9a8ab" strokeWidth="2" /></svg></WindowButton>
        <WindowButton $w={24} aria-label="Restore document"><svg width="12" height="9" viewBox="0 0 12 9" fill="none" stroke="#a9a8ab" aria-hidden="true"><path d="M1 3h8v5H1zM3 3V1h8v5H9" /></svg></WindowButton>
        <WindowButton $w={24} aria-label="Close document"><Cross size={11} color="#a9a8ab" weight={2.6} /></WindowButton>
      </MdiControls>
    </TabStrip>
  );
}

function Big({ w, off, icon, lines }) {
  return (
    <BigButton $w={w} $off={off}>
      <BigIcon>{icon}</BigIcon>
      {lines.map((line) => <span key={line}>{line}</span>)}
    </BigButton>
  );
}

function RibbonPanel() {
  return (
    <Ribbon>
      <RibbonBody>
        <Group $w={272}>
          <GroupBody $left={4}>
            <Big w={73} off icon={<GreenOrb size={35} kind="play" dim />} lines={['Normal', 'Simulation']} />
            <Big w={74} icon={<GreenOrb size={35} kind="stop" />} lines={['Stop', 'Simulation']} />
            <Stack $left={4}>
              <SmallButton><GreenOrb size={20} kind="step" />Step by Step</SmallButton>
              <SmallButton><GreenOrb size={20} kind="slow" />Slow Motion</SmallButton>
              <SmallButton><GreenOrb size={20} kind="pause" />Pause</SmallButton>
            </Stack>
          </GroupBody>
          <GroupLabel>Control</GroupLabel>
        </Group>
        <Group $w={98}>
          <GroupBody $left={4}>
            <Stack>
              <ModeSet>
                <ModeButton aria-label="Project mode"><Binder badge="ball" /></ModeButton>
                <ModeButton aria-label="Document mode"><PageMode /></ModeButton>
                <ModeButton aria-label="Selection mode"><Selection /></ModeButton>
              </ModeSet>
              <ModeButton aria-label="Add selection"><Selection plus /></ModeButton>
            </Stack>
          </GroupBody>
          <GroupLabel>Mode</GroupLabel>
        </Group>
        <Group $w={282}>
          <GroupBody $left={7}>
            <Stack $w="193px"><SmallButton><PathIcon />Open Path Detection Tool</SmallButton></Stack>
            <Big w={80} off icon={<FlaskIcon />} lines={['Simulation', 'Options']} />
          </GroupBody>
          <GroupLabel>Conditions</GroupLabel>
        </Group>
        <Group $w={231}>
          <GroupBody $left={2}>
            <Big w={54} off icon={<PlotterIcon kind="t" />} lines={['y (t)', 'Plotter']} />
            <Big w={52} off icon={<PlotterIcon kind="x" />} lines={['y (x)', 'Plotter']} />
            <Big w={54} off icon={<PlotterIcon kind="z" />} lines={['z (x,y)', 'Plotter']} />
            <Stack $w="37px" $left={3}>
              <SmallButton aria-label="Table"><TableIcon /></SmallButton>
              <SmallButton aria-label="Link"><LinkIcon /></SmallButton>
              <SmallButton aria-label="Branch"><BranchIcon /></SmallButton>
            </Stack>
            <Stack><SmallButton aria-label="Trigger"><BoltIcon /></SmallButton></Stack>
          </GroupBody>
          <GroupLabel>Measuring</GroupLabel>
        </Group>
        <Group $w={554}>
          <GroupBody $left={3}>
            <Big w={86} icon={<ScopeIcon />} lines={['Oscilloscope']} />
            <Big w={77} icon={<MeterIcon />} lines={['Multimeter']} />
            <Big w={76} icon={<ClampIcon />} lines={['Multimeter', 'Clamp']} />
            <Big w={68} icon={<TesterIcon />} lines={['Hydraulic', 'Tester']} />
            <Stack $w="134px" $left={2}>
              <SmallButton><GaugeIcon />Pressure Gauge</SmallButton>
              <SmallButton><ThermoIcon />Thermometer</SmallButton>
              <SmallButton><ConnectIcon />Disconnect</SmallButton>
            </Stack>
            <Stack>
              <SmallButton $off><ConnectIcon dim />Reconnect</SmallButton>
              <SmallButton><WrenchIcon />Repair Tool</SmallButton>
              <SmallButton><HammerIcon />Failure Tool</SmallButton>
            </Stack>
          </GroupBody>
          <GroupLabel>Troubleshooting</GroupLabel>
        </Group>
      </RibbonBody>
    </Ribbon>
  );
}

function ProjectExplorer() {
  return (
    <Explorer>
      <ExplorerHead>
        <ExplorerTitle>Project Explorer</ExplorerTitle>
        <HeadButton>?</HeadButton>
        <HeadButton aria-label="Pin"><svg width="10" height="12" viewBox="0 0 10 12" fill="none" stroke="#333" strokeWidth="1.400" aria-hidden="true"><path d="M2 1h6v6H2zM0 7.500h10M5 8v4M7 1v6" /></svg></HeadButton>
        <HeadButton aria-label="Close panel"><Cross size={11} color="#333" weight={1.7} /></HeadButton>
      </ExplorerHead>
      <ExplorerTools>
        <ToolButton aria-label="New project"><GreyBinder badge="new" /></ToolButton>
        <ToolButton aria-label="Open project"><GreyBinder badge="back" /></ToolButton>
        <ToolButton aria-label="Refresh project"><GreyBinder badge="sync" dark /></ToolButton>
        <ToolButton aria-label="Save project"><GreyBinder badge="save" /></ToolButton>
        <ToolButton aria-label="Close project"><GreyBinder badge="close" /></ToolButton>
        <ToolRule />
        <ToolButton $w={26} aria-label="More tools"><svg width="8" height="30" viewBox="0 0 8 30" aria-hidden="true"><path d="M1 22h6v1H1zM0 25h8l-4 4z" fill="#111" /></svg></ToolButton>
        <ToolButton $w={42} aria-label="Next">
          <svg width="40" height="16" viewBox="0 0 40 16" aria-hidden="true"><path d="M24 4h8V0l8 8-8 8v-4h-8z" fill="#2f68ea" /></svg>
        </ToolButton>
      </ExplorerTools>
      <TreeHeader>Name</TreeHeader>
      <Tree>
        <TreeRow $h={35} $left={14} $bold>
          <Toggle $gap={69} aria-label="Collapse project"><svg width="6" height="6" aria-hidden="true"><path d="M0 3h6" stroke="#111" strokeWidth="1.500" /></svg></Toggle>
          <ProjectIcon />
          <TreeLabel>Tut2A- AUTOMA</TreeLabel>
        </TreeRow>
        <TreeRow $h={29} $left={37} $hover>
          <Toggle $gap={10} aria-label="Expand diagram"><svg width="8" height="8" aria-hidden="true"><path d="M0 4h8M4 0v8" stroke="#111" strokeWidth="1.500" /></svg></Toggle>
          <OrbIcon />
          <ToolButton $w={37} aria-label="Locked"><LockIcon /></ToolButton>
          <DiagramIcon />
          <TreeLabel>Diagram1</TreeLabel>
        </TreeRow>
      </Tree>
      <TreeScroll>
        <ArrowButton $area="1 / 1" aria-label="Scroll left"><Chevron dir="left" color="#aaa" /></ArrowButton>
        <Thumb $area="1 / 2" />
        <ArrowButton $area="1 / 4" aria-label="Scroll right"><Chevron dir="right" color="#aaa" /></ArrowButton>
      </TreeScroll>
      <UserRow><UserIcon />Anonymous</UserRow>
    </Explorer>
  );
}

const RoundButton = ({ plus, label }) => (
  <button aria-label={label}>
    <svg width="22" height="22" viewBox="0 0 22 22" aria-hidden="true">
      <circle cx="11" cy="11" r="9.500" fill="#e9e9eb" stroke="#55545a" strokeWidth="1.500" />
      <path d={plus ? 'M5 11h12M11 5v12' : 'M6 11h10'} stroke="#4b4a50" strokeWidth="2.500" />
    </svg>
  </button>
);

function Status() {
  return (
    <StatusBar>
      <StatusReady>Ready</StatusReady>
      <StatusCell $w={312} />
      <StatusCell $w={140}>RST 00:00:22.850</StatusCell>
      <StatusCell $w={140} />
      <StatusCell $w={275}>Simulation Paces: 0.5 ms / 10 ms</StatusCell>
      <ZoomCell>
        <ZoomValue>92%</ZoomValue>
        <RoundButton label="Zoom out" />
        <ZoomSlider type="range" aria-label="Zoom" min="0" max="100" defaultValue="45" />
        <RoundButton plus label="Zoom in" />
      </ZoomCell>
    </StatusBar>
  );
}

function Tasks() {
  return (
    <TaskBar>
      <TaskButton aria-label="Start"><svg width="20" height="20" viewBox="0 0 20 20" fill="#fff" aria-hidden="true"><path d="M0 3l8-1v7H0zM9 2l11-2v9H9zM0 10h8v8l-8-1zM9 10h11v10L9 18z" /></svg></TaskButton>
      <TaskButton aria-label="Search"><svg width="22" height="22" viewBox="0 0 22 22" fill="none" stroke="#ddd" strokeWidth="1.600" aria-hidden="true"><circle cx="14" cy="8" r="6.500" /><path d="M9.500 12.500L1 21" /></svg></TaskButton>
      <TaskButton aria-label="Task view"><svg width="26" height="20" viewBox="0 0 26 20" fill="none" stroke="#ddd" strokeWidth="1.500" aria-hidden="true"><path d="M6 1h14v18H6zM4 3H1v14h3M22 3h3v14h-3" /></svg></TaskButton>
      <TaskButton $w={69} aria-label="Internet Explorer">
        <svg width="30" height="30" viewBox="0 0 30 30" fill="none" aria-hidden="true">
          <path d="M24 20q-2 6-8.500 6Q7 26 7 16.500T15.500 7 24 16.500H9" stroke="#45c4f4" strokeWidth="5" /><path d="M4 28Q-2 24 7 12T27 2q2 2 0 6" stroke="#f4c91c" strokeWidth="2.200" />
        </svg>
      </TaskButton>
      <TaskButton $w={51} $after={6} $open aria-label="File Explorer">
        <svg width="28" height="28" viewBox="0 0 28 26" preserveAspectRatio="none" aria-hidden="true"><path d="M1 1h10l2 3h14v21H1z" fill="#fce58c" /><path d="M1 1h10l2 3H1z" fill="#e8b93c" /><path d="M5 25v-8l3-3h12l3 3v8h-6v-5h-6v5z" fill="#3cb4ea" /></svg>
      </TaskButton>
      <TaskButton $open $active aria-label="Automation Studio"><Logo size={28} /></TaskButton>
      <Tray>
        <TrayButton $w={30} aria-label="Network"><svg width="21" height="20" viewBox="0 0 21 20" fill="none" stroke="#ddd" strokeWidth="1.600" aria-hidden="true"><path d="M6 3h14v10H6M13 13v5M8 18h9M1 2h5v5H1zM3 7v11" /></svg></TrayButton>
        <TrayButton $w={36} aria-label="Volume"><svg width="21" height="18" viewBox="0 0 21 18" fill="none" stroke="#ddd" strokeWidth="1.500" aria-hidden="true"><path d="M1 6h3l4-4v14l-4-4H1zM11 6q2 3 0 6M14 4q4 5 0 10M17 2q5 7 0 14" /></svg></TrayButton>
        <TrayButton $w={28} aria-label="Pen"><svg width="21" height="22" viewBox="0 0 21 22" fill="none" stroke="#ddd" strokeWidth="1.700" aria-hidden="true"><path d="M6 18L15 2q4 0 3 3l-8 14q-3 2-4-1zM5 12q-5 1-4 6t7 2M12 10q6-2 8 1" /></svg></TrayButton>
        <TrayButton $w={56} aria-label="Keyboard"><svg width="29" height="18" viewBox="0 0 29 18" fill="none" stroke="#ddd" aria-hidden="true"><path d="M1 1h27v16H1z" strokeWidth="1.600" /><path d="M4 5h21M4 9h21" strokeWidth="1.800" strokeDasharray="2 1.500" /><path d="M4 13h4M10 13h9M21 13h4" strokeWidth="1.600" /></svg></TrayButton>
        <Clock>8:45 PM<br />4/1/2020</Clock>
        <TrayButton $w={71} aria-label="Notifications"><svg width="21" height="21" viewBox="0 0 21 21" fill="none" stroke="#ddd" strokeWidth="1.600" aria-hidden="true"><path d="M1 1h19v15h-7l-3 4-3-4H1z" /></svg></TrayButton>
        <DesktopEdge />
      </Tray>
    </TaskBar>
  );
}

export default function App() {
  return (
    <Screen>
      <GlobalStyle />
      <TopBar />
      <Title />
      <Tabs />
      <RibbonPanel />
      <Workspace>
        <CanvasPane>
          <Sheet><Circuit /></Sheet>
          <VScroll>
            <ArrowButton $area="1 / 1" aria-label="Scroll up"><Chevron dir="up" /></ArrowButton>
            <Thumb $area="3 / 1" $w="19px" />
            <ArrowButton $area="5 / 1" aria-label="Scroll down"><Chevron dir="down" /></ArrowButton>
          </VScroll>
          <HScroll>
            <ArrowButton $area="1 / 1" aria-label="Scroll left"><Chevron dir="left" /></ArrowButton>
            <Thumb $area="1 / 3" $h="19px" />
            <ArrowButton $area="1 / 5" aria-label="Scroll right"><Chevron dir="right" /></ArrowButton>
          </HScroll>
        </CanvasPane>
        <ProjectExplorer />
      </Workspace>
      <Status />
      <Tasks />
    </Screen>
  );
}
